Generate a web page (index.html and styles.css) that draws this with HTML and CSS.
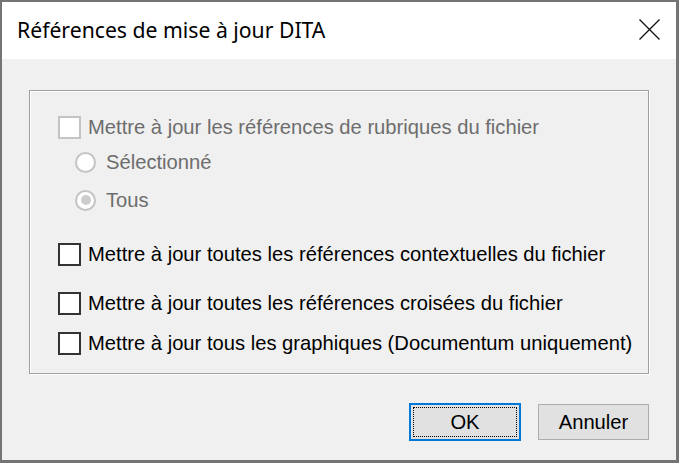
FILE: index.html
```html
<!DOCTYPE html>
<html lang="fr">
<head>
<meta charset="utf-8">
<title>Références de mise à jour DITA</title>
<link rel="stylesheet" href="styles.css">
</head>
<body>
<div class="window">
  <div class="titlebar">
    <span class="title">Références de mise à jour DITA</span>
    <span class="close">
      <svg width="21" height="21" viewBox="0 0 21 21"><path d="M0.5 0.5 L20.5 20.5 M20.5 0.5 L0.5 20.5" stroke="#111" stroke-width="1.3" fill="none"/></svg>
    </span>
  </div>
  <div class="content">
    <div class="group">
      <div class="row disabled">
        <span class="check"></span>
        <span class="label">Mettre à jour les références de rubriques du fichier</span>
      </div>
      <div class="row disabled indent r1">
        <span class="radio"></span>
        <span class="label">Sélectionné</span>
      </div>
      <div class="row disabled indent r2">
        <span class="radio checked"></span>
        <span class="label">Tous</span>
      </div>
      <div class="row c2">
        <span class="check"></span>
        <span class="label">Mettre à jour toutes les références contextuelles du fichier</span>
      </div>
      <div class="row c3">
        <span class="check"></span>
        <span class="label">Mettre à jour toutes les références croisées du fichier</span>
      </div>
      <div class="row c4">
        <span class="check"></span>
        <span class="label">Mettre à jour tous les graphiques (Documentum uniquement)</span>
      </div>
    </div>
    <div class="buttons">
      <button class="btn default"><span class="focus">OK</span></button>
      <button class="btn">Annuler</button>
    </div>
  </div>
</div>
</body>
</html>
```
FILE: styles.css
```css
html, body {
  margin: 0;
  padding: 0;
  width: 679px;
  height: 463px;
  overflow: hidden;
  background: #f0f0f0;
}
.window {
  box-sizing: border-box;
  width: 679px;
  height: 463px;
  border-style: solid;
  border-color: #747474;
  border-width: 2px 3px 3px 2px;
  display: flex;
  flex-direction: column;
  font-family: "Liberation Sans", Arial, sans-serif;
  font-size: 20.2px;
  color: #000;
}
.titlebar {
  height: 57px;
  background: #fff;
  display: flex;
  align-items: center;
  justify-content: space-between;
  padding: 0 16px 0 15px;
  flex: none;
}
.title {
  font-family: "Noto Sans", "Open Sans", sans-serif;
  font-size: 21.2px;
  color: #000;
  margin-top: -2px;
}
.close {
  display: flex;
  margin-top: -3px;
}
.content {
  flex: 1;
  background: #f0f0f0;
  display: flex;
  flex-direction: column;
  padding: 31px 0 0 27px;
}
.group {
  box-sizing: border-box;
  width: 620px;
  height: 284px;
  border: 1px solid #a0a0a0;
  box-shadow: inset 1px 1px 0 #fff, 1px 1px 0 #fff;
  padding: 24px 0 0 28px;
  display: flex;
  flex-direction: column;
}
.row {
  height: 24px;
  display: flex;
  align-items: center;
}
.r1 { margin-top: 11px; }
.r2 { margin-top: 14px; }
.c2 { margin-top: 30px; }
.c3 { margin-top: 25px; }
.c4 { margin-top: 16px; }
.indent { padding-left: 17px; }
.check {
  box-sizing: border-box;
  width: 23px;
  height: 23px;
  border: 2px solid #333;
  background: #fff;
  flex: none;
}
.radio {
  box-sizing: border-box;
  width: 21px;
  height: 21px;
  border-radius: 50%;
  border: 2px solid #c4c4c4;
  background: #fff;
  flex: none;
  display: flex;
  align-items: center;
  justify-content: center;
}
.radio.checked::after {
  content: "";
  width: 10px;
  height: 10px;
  border-radius: 50%;
  background: #cccccc;
}
.label {
  margin-left: 7px;
  white-space: nowrap;
}
.indent .label { margin-left: 10px; }
.disabled .label { color: #6d6d6d; }
.disabled .check { border-color: #c4c4c4; }
.buttons {
  display: flex;
  justify-content: flex-end;
  align-items: center;
  gap: 17px;
  padding-right: 27px;
  margin-top: 29px;
}
.btn {
  box-sizing: border-box;
  width: 111px;
  height: 36px;
  border: 1px solid #adadad;
  background: #e1e1e1;
  font-family: "Liberation Sans", Arial, sans-serif;
  font-size: 20.2px;
  color: #000;
  padding: 0;
  display: flex;
  align-items: center;
  justify-content: center;
}
.btn.default {
  width: 112px;
  height: 38px;
  border: 2px solid #0078d7;
  padding: 2px;
}
.focus {
  box-sizing: border-box;
  width: 100%;
  height: 100%;
  border: 1px dotted #000;
  display: flex;
  align-items: center;
  justify-content: center;
}
```
